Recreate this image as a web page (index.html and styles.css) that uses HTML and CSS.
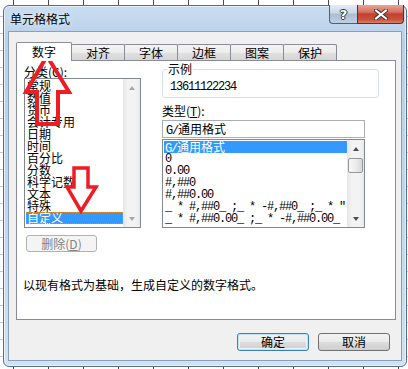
FILE: index.html
```html
<!DOCTYPE html>
<html lang="zh-CN">
<head>
<meta charset="utf-8">
<title>单元格格式</title>
<link rel="stylesheet" href="styles.css">
</head>
<body>
<div class="desk">
  <div class="window">
    <div class="titlebar">
      <span class="title">单元格格式</span>
      <div class="ctrls">
        <div class="cbtn help">?</div>
        <div class="cbtn close">
          <svg width="14" height="11" viewBox="0 0 14 11"><path d="M2 1.5 L12 9.5 M12 1.5 L2 9.5" stroke="#3a3a3a" stroke-width="4" stroke-linecap="square"/><path d="M2 1.5 L12 9.5 M12 1.5 L2 9.5" stroke="#fff" stroke-width="2" stroke-linecap="square"/></svg>
        </div>
      </div>
    </div>
    <div class="client">
      <div class="tabs">
        <div class="tab active">数字</div>
        <div class="tab">对齐</div>
        <div class="tab">字体</div>
        <div class="tab">边框</div>
        <div class="tab">图案</div>
        <div class="tab">保护</div>
      </div>
      <div class="panel">
        <div class="cols">
          <div class="leftcol">
            <div class="lbl">分类(<u>C</u>):</div>
            <div class="listbox cat">
              <div class="items">
                <div class="item">常规</div>
                <div class="item">数值</div>
                <div class="item">货币</div>
                <div class="item">会计专用</div>
                <div class="item">日期</div>
                <div class="item">时间</div>
                <div class="item">百分比</div>
                <div class="item">分数</div>
                <div class="item">科学记数</div>
                <div class="item">文本</div>
                <div class="item">特殊</div>
                <div class="item sel focus">自定义</div>
              </div>
              <div class="sb">
                <div class="sbbtn"><span class="tri up dim"></span></div>
                <div class="track"></div>
                <div class="sbbtn"><span class="tri down dim"></span></div>
              </div>
            </div>
            <div class="btn disabled del">删除(<u>D</u>)</div>
          </div>
          <div class="rightcol">
            <fieldset class="sample">
              <legend>示例</legend>
              <div class="val lat">13611122234</div>
            </fieldset>
            <div class="lbl type">类型(<u>T</u>):</div>
            <div class="input"><span class="lat">G/</span>通用格式</div>
            <div class="listbox types">
              <div class="items">
                <div class="item sel"><span class="lat">G/</span>通用格式</div>
                <div class="item lat">0</div>
                <div class="item lat">0.00</div>
                <div class="item lat">#,##0</div>
                <div class="item lat">#,##0.00</div>
                <div class="item lat">_ * #,##0_ ;_ * -#,##0_ ;_ * "-"_ ;_ @_ </div>
                <div class="item lat">_ * #,##0.00_ ;_ * -#,##0.00_ ;_ * "-"??_ ;_ @_ </div>
              </div>
              <div class="sb">
                <div class="sbbtn"><span class="tri up"></span></div>
                <div class="thumb"></div>
                <div class="track"></div>
                <div class="sbbtn"><span class="tri down"></span></div>
              </div>
            </div>
          </div>
        </div>
        <div class="desc">以现有格式为基础，生成自定义的数字格式。</div>
      </div>
      <div class="buttons">
        <div class="btn default">确定</div>
        <div class="btn">取消</div>
      </div>
    </div>
  </div>
  <svg class="annot" width="408" height="369" viewBox="0 0 408 369">
    <polygon points="47,56 69,92 58,92 58,124 37,124 37,92 26,92" fill="none" stroke="#ee1c24" stroke-width="4" stroke-linejoin="miter"/>
    <polygon points="74,168 88,168 88,187 96,187 81,211 67,187 74,187" fill="none" stroke="#ee1c24" stroke-width="3.5" stroke-linejoin="miter"/>
  </svg>
</div>
</body>
</html>
```

FILE: styles.css
```css
* { box-sizing: border-box; }
html, body { margin: 0; padding: 0; }
body {
  width: 408px;
  height: 369px;
  overflow: hidden;
  font-family: "Noto Sans CJK SC", "Noto Sans", sans-serif;
  font-size: 12px;
  color: #000;
}
.desk {
  position: relative;
  width: 408px;
  height: 369px;
  padding: 5px 1px 0 3px;
  background:
    repeating-linear-gradient(90deg, transparent 0 13px, #4a4a4a 13px 14px, transparent 14px 35px),
    repeating-linear-gradient(180deg, transparent 0 16px, #c8c8c8 16px 17px),
    #fff;
}
.window {
  width: 404px;
  height: 362px;
  border: 1px solid #566f8a;
  border-radius: 6px;
  background: linear-gradient(180deg, #c9ddf1 0%, #b8d0ea 10%, #c2d7ee 60%, #cfe1f3 100%);
  box-shadow: inset 0 0 0 1px rgba(255,255,255,0.55);
  padding: 0 4px 5px 4px;
  display: flex;
  flex-direction: column;
}
.titlebar {
  height: 25px;
  display: flex;
  align-items: flex-start;
}
.title {
  margin-left: 2px;
  margin-top: 6px;
  line-height: 13px;
  font-size: 12px;
  text-shadow: 0 0 6px rgba(255,255,255,0.9);
}
.ctrls {
  margin-left: auto;
  margin-top: -1px;
  margin-right: -2px;
  display: flex;
}
.cbtn {
  height: 19px;
  display: flex;
  align-items: center;
  justify-content: center;
  border: 1px solid #4e6179;
  border-top: none;
}
.help {
  width: 28px;
  border-radius: 0 0 0 4px;
  border-right: none;
  background: linear-gradient(180deg, #e3ecf5 0%, #c9d7e6 45%, #a9bdd3 50%, #bed0e3 100%);
  color: #fff;
  font-family: "DejaVu Sans", sans-serif;
  font-weight: bold;
  font-size: 13px;
  text-shadow: 1px 0 0 #333, -1px 0 0 #333, 0 1px 0 #333, 0 -1px 0 #333;
}
.close {
  width: 47px;
  border-radius: 0 0 4px 0;
  border-color: #6a2a22;
  background: linear-gradient(180deg, #e7a597 0%, #d56e5e 40%, #c2402e 50%, #c9503c 80%, #d9806c 100%);
}
.client {
  flex: 1;
  border: 1px solid #8b9fb6;
  background: #f0f0f0;
  padding: 10px 5px 0 7px;
  display: flex;
  flex-direction: column;
}
.tabs {
  display: flex;
  align-items: flex-end;
  height: 19px;
  margin-bottom: -1px;
  position: relative;
  z-index: 1;
}
.tab {
  width: 54px;
  height: 16px;
  margin-bottom: 1px;
  margin-left: -1px;
  border: 1px solid #898c95;
  border-bottom: none;
  border-radius: 2px 2px 0 0;
  background: linear-gradient(180deg, #f4f4f4 0%, #ececec 50%, #e0e0e0 51%, #d6d6d6 100%);
  text-align: center;
  line-height: 15px;
}
.tab.active {
  width: 56px;
  height: 19px;
  margin-bottom: 0;
  margin-left: 0;
  background: #fff;
  line-height: 18px;
  position: relative;
  z-index: 2;
}
.panel {
  height: 260px;
  border: 1px solid #898c95;
  background: #fff;
  padding: 5px 0 0 7px;
}
.cols {
  display: flex;
  align-items: flex-start;
}
.leftcol {
  width: 117px;
  display: flex;
  flex-direction: column;
}
.rightcol {
  width: 217px;
  margin-left: 21px;
  margin-top: -3px;
  display: flex;
  flex-direction: column;
}
.lbl {
  line-height: 12px;
  height: 12px;
}
.lbl u { text-decoration: underline; }
.lat {
  font-family: "Liberation Mono", "DejaVu Sans Mono", monospace;
  font-size: 12px;
  letter-spacing: -1.2px;
}
.listbox {
  border: 1px solid #828790;
  background: #fff;
  display: flex;
}
.listbox.cat { height: 150px; }
.listbox.types { height: 89px; width: 203px; margin-top: 1px; }
.items {
  flex: 1;
  min-width: 0;
  padding: 1px 0 0 1px;
  overflow: hidden;
}
.item {
  height: 12px;
  line-height: 12px;
  padding-left: 1px;
  white-space: pre;
  overflow: hidden;
}
.item.sel {
  background: #3399ff;
  color: #fff;
}
.item.focus {
  outline: 1px dotted #e08a2a;
  outline-offset: -1px;
}
.sb {
  width: 17px;
  display: flex;
  flex-direction: column;
  background: linear-gradient(90deg, #e6e6e6 0%, #f3f3f3 30%, #f3f3f3 70%, #e9e9e9 100%);
}
.sbbtn {
  height: 17px;
  display: flex;
  align-items: center;
  justify-content: center;
}
.track { flex: 1; }
.thumb {
  height: 15px;
  margin: 1px 1px 0 1px;
  border: 1px solid #979797;
  border-radius: 2px;
  background: linear-gradient(90deg, #f7f7f7 0%, #ececec 50%, #d8d8d8 100%);
}
.tri {
  width: 0;
  height: 0;
  border-left: 3.5px solid transparent;
  border-right: 3.5px solid transparent;
}
.tri.up { border-bottom: 4px solid #4d4d4d; }
.tri.down { border-top: 4px solid #4d4d4d; }
.tri.up.dim { border-bottom-color: #a8a8a8; }
.tri.down.dim { border-top-color: #a8a8a8; }
.btn {
  height: 18px;
  width: 72px;
  border: 1px solid #707070;
  border-radius: 3px;
  background: linear-gradient(180deg, #f2f2f2 0%, #ebebeb 50%, #dddddd 51%, #cfcfcf 100%);
  text-align: center;
  line-height: 16px;
}
.btn.disabled {
  width: 71px;
  height: 17px;
  line-height: 15px;
  border-color: #adb2b5;
  background: #f4f4f4;
  color: #838383;
}
.del {
  margin-top: 7px;
  margin-left: 2px;
}
.btn.default {
  border-color: #3c7fb1;
  box-shadow: inset 0 0 0 1px #c4e5f6, inset 0 0 0 2px #e4f3fb;
}
.sample {
  margin: 0;
  width: 217px;
  border: 1px solid #d5dfe5;
  border-radius: 3px;
  padding: 0 0 4px 7px;
}
.sample legend {
  padding: 0 1px;
  margin-left: -3px;
  line-height: 12px;
}
.val {
  margin-top: 6px;
  line-height: 12px;
}
.lbl.type { margin-top: 7px; }
.input {
  margin-top: 3px;
  width: 203px;
  height: 18px;
  border: 1px solid #abadb3;
  padding-left: 3px;
  line-height: 16px;
}
.desc {
  margin-top: 27px;
  margin-left: -1px;
  line-height: 12px;
}
.buttons {
  margin-top: 13px;
  display: flex;
  justify-content: flex-end;
  gap: 9px;
  padding-right: 6px;
}
.annot {
  position: absolute;
  left: 0;
  top: 0;
  pointer-events: none;
}
```
